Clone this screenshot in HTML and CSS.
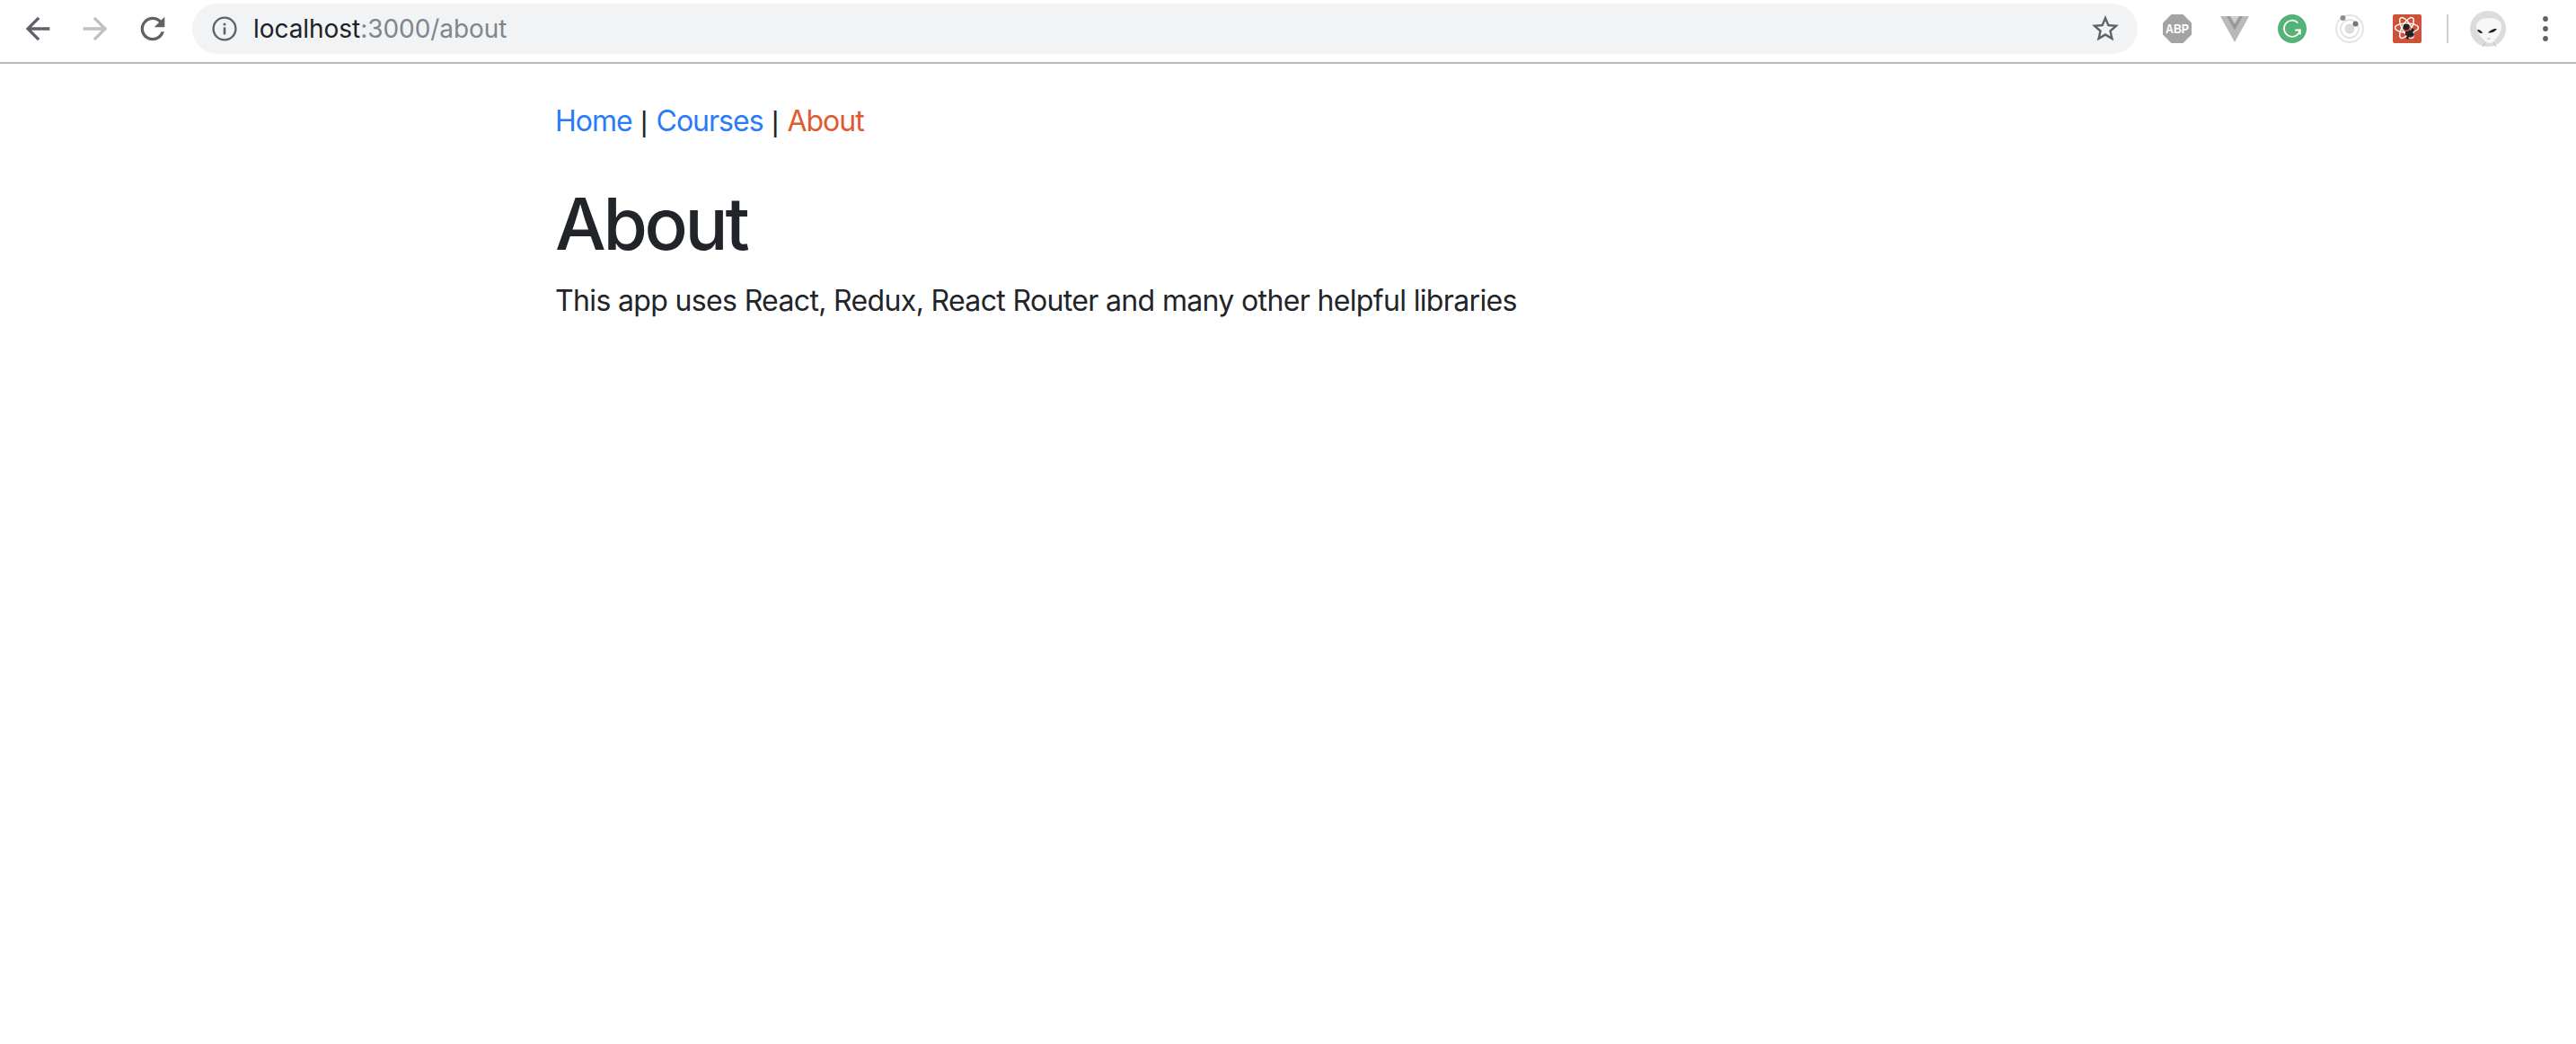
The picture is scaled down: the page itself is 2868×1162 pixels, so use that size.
FILE: index.html
```html
<!DOCTYPE html>
<html lang="en">
<head>
    <meta charset="UTF-8">
    <meta name="viewport" content="width=device-width, initial-scale=1.0">
    <title>About</title>
    <link rel="stylesheet" href="styles.css">
</head>
<body>
    <div class="toolbar">
        <span class="tool-btn">
            <svg class="nav-icon" viewBox="0 0 24 24"><path d="M20 11H7.83l5.59-5.59L12 4l-8 8 8 8 1.41-1.41L7.83 13H20v-2z"/></svg>
        </span>
        <span class="tool-btn">
            <svg class="nav-icon disabled" viewBox="0 0 24 24"><path d="M4 11h12.17l-5.59-5.59L12 4l8 8-8 8-1.41-1.41L16.17 13H4v-2z"/></svg>
        </span>
        <span class="tool-btn">
            <svg class="nav-icon" viewBox="0 0 24 24"><path d="M17.65 6.35C16.2 4.9 14.21 4 12 4c-4.42 0-7.99 3.58-7.99 8s3.57 8 7.99 8c3.73 0 6.84-2.55 7.73-6h-2.08c-.82 2.33-3.04 4-5.65 4-3.31 0-6-2.69-6-6s2.69-6 6-6c1.66 0 3.14.69 4.22 1.78L13 11h7V4l-2.35 2.35z"/></svg>
        </span>
        <div class="omnibox">
            <svg class="info-icon" viewBox="0 0 28 28">
                <circle cx="14" cy="14" r="12.4" fill="none" stroke="#5f6368" stroke-width="2.4"/>
                <rect x="12.7" y="12.4" width="2.6" height="8" fill="#5f6368"/>
                <rect x="12.7" y="7.8" width="2.6" height="2.6" fill="#5f6368"/>
            </svg>
            <span class="url">localhost<span class="url-rest">:3000/about</span></span>
            <svg class="star-icon" viewBox="0 0 24 24"><path d="M22 9.24l-7.19-.62L12 2 9.19 8.63 2 9.24l5.46 4.73L5.82 21 12 17.27 18.18 21l-1.63-7.03L22 9.24zM12 15.4l-3.76 2.27 1-4.28-3.32-2.88 4.38-.38L12 6.1l1.71 4.04 4.38.38-3.32 2.88 1 4.28L12 15.4z"/></svg>
        </div>
        <div class="extensions">
            <span class="tool-btn">
                <svg class="ext-icon" viewBox="0 0 32 32">
                    <polygon points="9.5,0 22.5,0 32,9.5 32,22.5 22.5,32 9.5,32 0,22.5 0,9.5" fill="#a3a3a3"/>
                    <text x="16" y="21" class="abp-text" textLength="26" lengthAdjust="spacingAndGlyphs">ABP</text>
                </svg>
            </span>
            <span class="tool-btn">
                <svg class="ext-icon" viewBox="0 0 32 32">
                    <polygon points="0,2 32,2 16,31" fill="#b9b9b9"/>
                    <polygon points="7,2 25,2 16,18" fill="#9a9a9a"/>
                    <polygon points="11,2 21,2 16,10.5" fill="#cfcfcf"/>
                </svg>
            </span>
            <span class="tool-btn">
                <svg class="ext-icon" viewBox="0 0 32 32">
                    <circle cx="16" cy="16" r="16" fill="#56b378"/>
                    <path d="M22.5 9.5A9 9 0 1 0 24.8 17.5H19" fill="none" stroke="#fff" stroke-width="1.7"/>
                    <path d="M25 22.5l-.3-5-4.6.2" fill="none" stroke="#fff" stroke-width="1.7"/>
                </svg>
            </span>
            <span class="tool-btn">
                <svg class="ext-icon" viewBox="0 0 32 32">
                    <circle cx="16" cy="16" r="15" fill="none" stroke="#e2e2e2" stroke-width="1.8"/>
                    <circle cx="16" cy="16" r="10" fill="none" stroke="#e2e2e2" stroke-width="1.8"/>
                    <circle cx="16" cy="16" r="5.5" fill="#dcdcdc"/>
                    <circle cx="8.5" cy="4" r="3" fill="#8e8e8e"/>
                    <circle cx="22.5" cy="10.5" r="3" fill="#757575"/>
                </svg>
            </span>
            <span class="tool-btn">
                <svg class="ext-icon" viewBox="0 0 32 32">
                    <rect width="32" height="32" rx="2" fill="#cd5238"/>
                    <g fill="none" stroke="#fff" stroke-width="1.4">
                        <ellipse cx="15.5" cy="15" rx="13" ry="5"/>
                        <ellipse cx="15.5" cy="15" rx="13" ry="5" transform="rotate(60 15.5 15)"/>
                        <ellipse cx="15.5" cy="15" rx="13" ry="5" transform="rotate(120 15.5 15)"/>
                    </g>
                    <circle cx="15" cy="14" r="3.4" fill="#222"/>
                    <path d="M14 19h3l2-2 1 1 1-3 2 1 1 2-2 2 2 2-1 3-2-1-1 2-2-1-1 3-2-1 1-3-2-1z" fill="#222"/>
                </svg>
            </span>
        </div>
        <span class="separator"></span>
        <span class="tool-btn">
            <svg class="avatar" viewBox="0 0 40 40">
                <circle cx="20" cy="20" r="20" fill="#dcdcdc"/>
                <path d="M7 18C7 11 13 8 21 8s14 3 14 10c0 7-7 15-11 18h-4C15 33 7 25 7 18z" fill="#f7f7f7"/>
                <path d="M17 35l-3 5M26 35l3 5" stroke="#bdbdbd" stroke-width="1" fill="none"/>
                <path d="M8 21c2-.5 5 1 6 4-3 .5-5-1-6-4z" fill="#222"/>
                <path d="M30 20c-3-.5-8 1.500-10 4.500 4 .5 8-1 10-4.500z" fill="#222"/>
                <path d="M19 31h4" stroke="#b5b5b5" stroke-width="1"/>
            </svg>
        </span>
        <span class="tool-btn">
            <svg class="menu-icon" viewBox="0 0 8 32">
                <circle cx="4" cy="5" r="2.9"/>
                <circle cx="4" cy="16" r="2.9"/>
                <circle cx="4" cy="27" r="2.9"/>
            </svg>
        </span>
    </div>

    <div class="page">
        <nav class="site-nav">
            <a href="#home">Home</a> <span class="pipe">|</span> <a href="#courses">Courses</a> <span class="pipe">|</span> <a href="#about" class="active">About</a>
        </nav>
        <h1>About</h1>
        <p>This app uses React, Redux, React Router and many other helpful libraries</p>
    </div>
</body>
</html>
```

FILE: styles.css
```css
html, body {
    margin: 0;
    padding: 0;
    background-color: #fff;
}

body {
    font-family: Inter, "Liberation Sans", sans-serif;
    color: #212529;
}

.toolbar {
    display: flex;
    align-items: center;
    height: 64px;
    padding: 0 2px 5px 10px;
    border-bottom: 2px solid #bababa;
}

.tool-btn {
    display: flex;
    align-items: center;
    justify-content: center;
    width: 64px;
    flex-shrink: 0;
}

.nav-icon {
    width: 40px;
    height: 40px;
    fill: #5f6368;
}

.nav-icon.disabled {
    fill: #bdc1c6;
}

.omnibox {
    display: flex;
    align-items: center;
    flex: 1;
    height: 56px;
    margin-left: 12px;
    padding: 0 18px 0 22px;
    border-radius: 28px;
    background-color: #f1f3f4;
}

.info-icon {
    width: 28px;
    height: 28px;
    margin-right: 18px;
}

.url {
    flex: 1;
    font-size: 28px;
    letter-spacing: -0.05px;
    color: #202124;
}

.url-rest {
    color: #80868b;
}

.star-icon {
    width: 36px;
    height: 36px;
    fill: #5f6368;
}

.extensions {
    display: flex;
    margin-left: 12px;
}

.ext-icon {
    width: 32px;
    height: 32px;
}

.abp-text {
    font-family: "Liberation Sans", sans-serif;
    font-size: 14px;
    font-weight: 700;
    fill: #fff;
    text-anchor: middle;
}

.separator {
    width: 2px;
    height: 32px;
    margin: 0 12px;
    background-color: #cfcfcf;
    flex-shrink: 0;
}

.avatar {
    width: 40px;
    height: 40px;
}

.menu-icon {
    width: 8px;
    height: 32px;
    fill: #5f6368;
}

.page {
    padding: 40px 0 0 618px;
}

.site-nav {
    font-size: 32px;
    line-height: 48px;
    letter-spacing: -0.65px;
}

.site-nav a {
    color: #2a7bf6;
    text-decoration: none;
    letter-spacing: -1px;
}

.site-nav a.active {
    color: #e05a30;
}

.pipe {
    margin: 0 1.500px 0 1px;
    font-family: "Liberation Sans", sans-serif;
}

h1 {
    margin: 42px 0 14px;
    font-size: 80px;
    font-weight: 500;
    line-height: 96px;
    letter-spacing: -3.3px;
}

p {
    margin: 0;
    font-size: 32px;
    line-height: 48px;
    letter-spacing: -0.65px;
}
```
